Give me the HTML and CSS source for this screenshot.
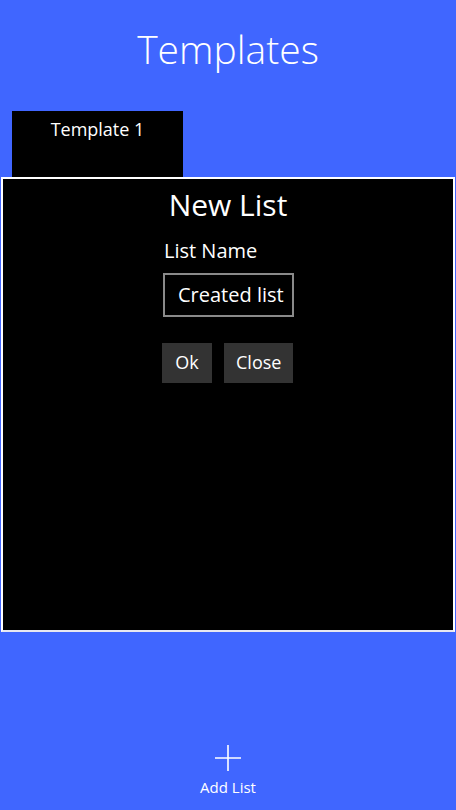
FILE: index.html
```html
<!DOCTYPE html>
<html lang="en">
<head>
    <meta charset="UTF-8">
    <meta name="viewport" content="width=device-width, initial-scale=1.0">
    <title>Templates</title>
    <link rel="stylesheet" href="styles.css">
</head>
<body>

<div class="page">
    <h1 class="title">Templates</h1>

    <div class="templates">
        <div class="tile">Template 1</div>
    </div>

    <div class="appbar">
        <div class="appbar-button">
            <svg width="28" height="28" viewBox="0 0 28 28">
                <path d="M14 1 V27 M1 14 H27" stroke="#fff" stroke-width="1.6" fill="none"/>
            </svg>
            <span>Add List</span>
        </div>
    </div>
</div>

<!-- popup for a new list -->
<div class="dialog">
    <h2>New List</h2>
    <div class="form">
        <label for="listName">List Name</label>
        <input id="listName" type="text" value="Created list">
        <div class="actions">
            <button class="btn">Ok</button>
            <button class="btn">Close</button>
        </div>
    </div>
</div>

</body>
</html>
```

FILE: styles.css
```css
body {
    margin: 0;
    font-family: "Open Sans", "Noto Sans", sans-serif;
    background-color: #4066FF; /* accent blue */
    color: #fff;
}

.page {
    height: 810px;
    display: flex;
    flex-direction: column;
}

.title {
    margin: 0;
    padding-top: 25px;
    height: 111px;
    box-sizing: border-box;
    text-align: center;
    font-size: 39px;
    font-weight: 300;
    line-height: 48px;
}

.templates {
    padding-left: 12px;
    height: 66px;
    display: flex;
}

.tile {
    width: 171px;
    height: 66px;
    background-color: #000;
    text-align: center;
    font-size: 18px;
    line-height: 20px;
    padding-top: 8px;
    box-sizing: border-box;
}

.appbar {
    margin-top: auto;
    display: flex;
    justify-content: center;
    padding-bottom: 13px;
}

.appbar-button {
    display: flex;
    flex-direction: column;
    align-items: center;
    font-size: 15px;
    gap: 5px;
}

.dialog {
    position: absolute;
    top: 177px;
    left: 1px;
    right: 1px;
    height: 455px;
    box-sizing: border-box;
    border: 2px solid #fff;
    border-bottom-color: #e8e8f0;
    background-color: #000;
}

.dialog h2 {
    margin: 6px 0 0;
    text-align: center;
    font-size: 30px;
    font-weight: 400;
    line-height: 40px;
}

.form {
    margin-left: 160px;
    display: flex;
    flex-direction: column;
    align-items: flex-start;
}

.form label {
    margin-top: 13px;
    margin-left: 1px;
    font-size: 20px;
    line-height: 26px;
}

.form input {
    margin-top: 9px;
    width: 131px;
    height: 44px;
    box-sizing: border-box;
    border: 2px solid #8a8a8a;
    background-color: #000;
    color: #fff;
    font-family: inherit;
    font-size: 20px;
    padding: 0 0 2px 13px;
    outline: none;
}

.actions {
    margin-top: 26px;
    display: flex;
    gap: 12px;
    margin-left: -1px;
}

.btn {
    height: 40px;
    padding: 0 12px 2px;
    border: none;
    background-color: #333;
    color: #fff;
    font-family: inherit;
    font-size: 18px;
    min-width: 50px;
}
```
